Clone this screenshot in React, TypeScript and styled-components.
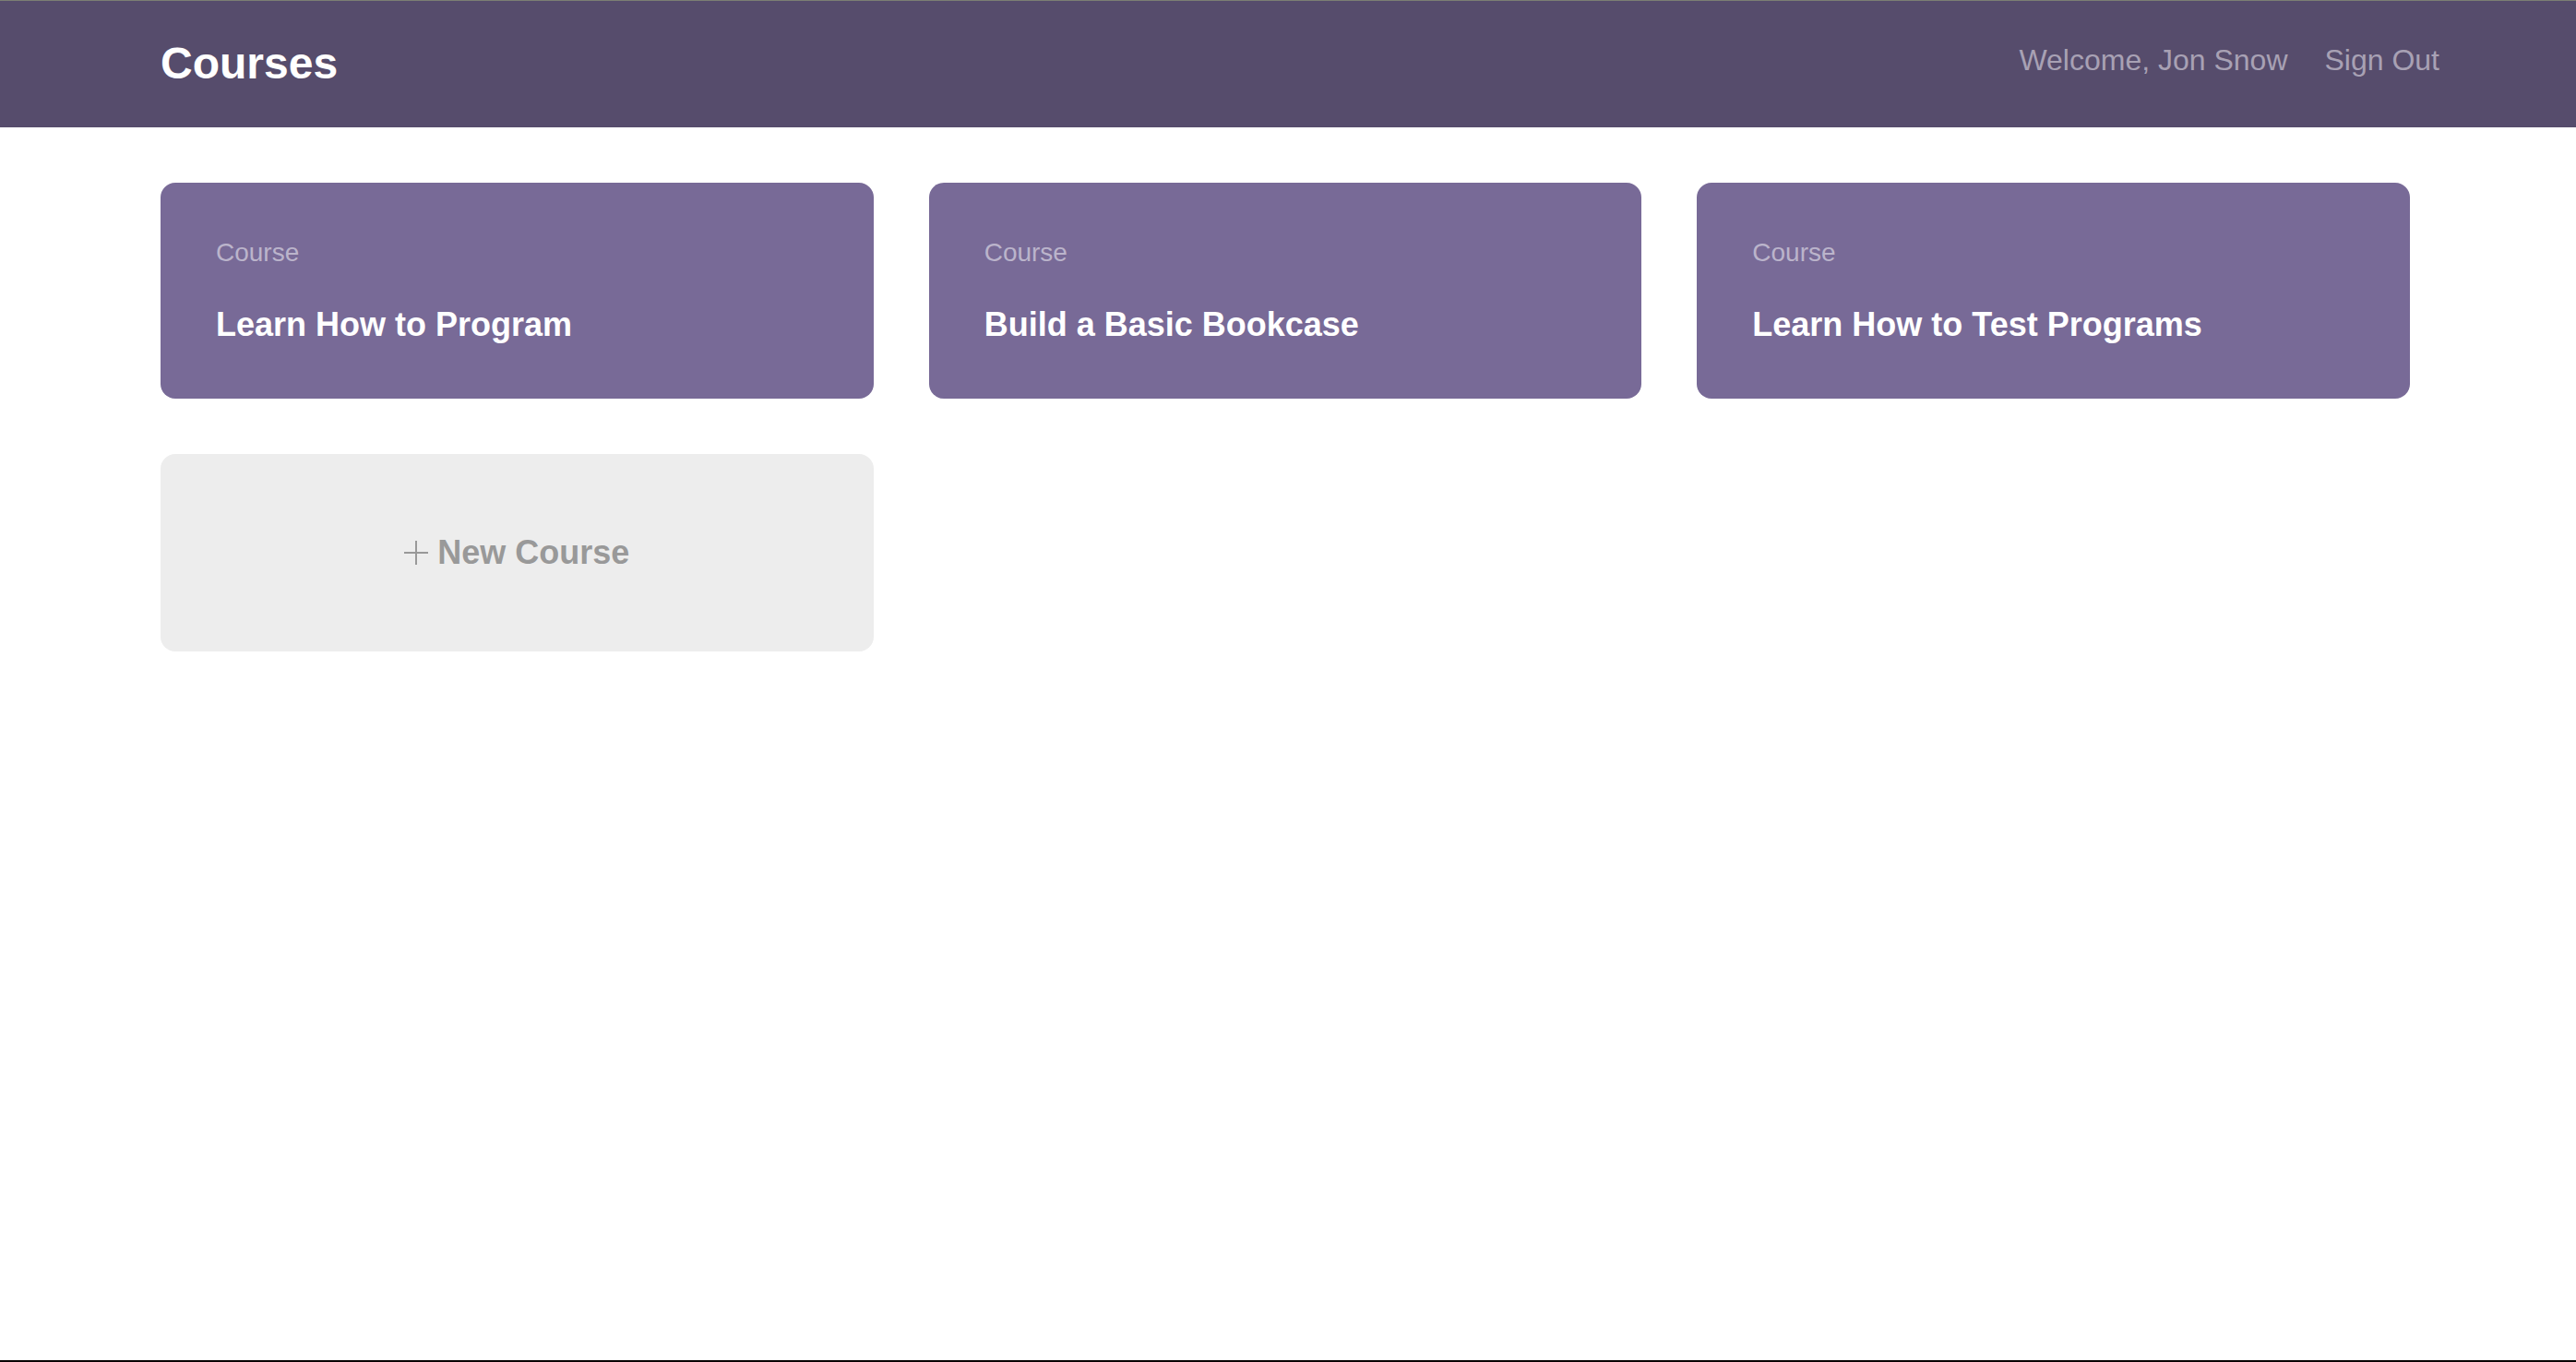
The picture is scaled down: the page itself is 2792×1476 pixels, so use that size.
import React from "react";
import styled, { createGlobalStyle } from "styled-components";

const GlobalStyle = createGlobalStyle`
  *, *::before, *::after {
    box-sizing: border-box;
  }
  body {
    margin: 0;
    background: #fff;
    font-family: "Liberation Sans", Helvetica, Arial, sans-serif;
  }
  a {
    color: inherit;
    text-decoration: none;
  }
`;

const Page = styled.div`
  min-height: 100vh;
  border-bottom: 2px solid #080404;
`;

const Header = styled.header`
  display: flex;
  align-items: flex-start;
  justify-content: space-between;
  padding: 40px 148px 41px 174px;
  border-top: 1px solid #7b7e74;
  background: #564c6c;
`;

const Logo = styled.h1`
  margin: 0;
  color: #fff;
  font-size: 48px;
  line-height: 56px;
`;

const Nav = styled.nav`
  display: flex;
  gap: 40px;
  padding-top: 6px;
  color: #a8a1b4;
  font-size: 32px;
  line-height: 36px;
`;

const CourseGrid = styled.main`
  display: grid;
  grid-template-columns: repeat(3, minmax(0, 1fr));
  align-items: start;
  gap: 60px;
  padding: 60px 180px 60px 174px;
`;

const Card = styled.a`
  display: flex;
  flex-direction: column;
  gap: 42px;
  padding: 60px;
  border-radius: 16px;
  background: #786a97;
`;

const CardLabel = styled.span`
  color: #bbb4cb;
  font-size: 28px;
  line-height: 32px;
`;

const CardTitle = styled.h2`
  margin: 0;
  color: #fff;
  font-size: 36px;
  line-height: 40px;
`;

const NewCard = styled.a`
  display: flex;
  align-items: center;
  justify-content: center;
  gap: 10px;
  padding: 87px 60px;
  border-radius: 16px;
  background: #ededed;
  color: #999;
  font-size: 36px;
  font-weight: 700;
  line-height: 40px;
`;

const PlusIcon = () => (
  <svg width="26" height="26" viewBox="0 0 26 26" aria-hidden="true">
    <path d="M12 0h2v12h12v2H14v12h-2V14H0v-2h12z" fill="currentColor" />
  </svg>
);

const courses = [
  { id: 1, title: "Learn How to Program" },
  { id: 2, title: "Build a Basic Bookcase" },
  { id: 3, title: "Learn How to Test Programs" },
];

export default function App() {
  return (
    <Page>
      <GlobalStyle />
      <Header>
        <Logo>
          <a href="#courses">Courses</a>
        </Logo>
        <Nav>
          <span>Welcome, Jon Snow</span>
          <a href="#signout">Sign Out</a>
        </Nav>
      </Header>
      <CourseGrid>
        {courses.map((course) => (
          <Card key={course.id} href={`#courses/${course.id}`}>
            <CardLabel>Course</CardLabel>
            <CardTitle>{course.title}</CardTitle>
          </Card>
        ))}
        <NewCard href="#courses/create">
          <PlusIcon />
          <span>New Course</span>
        </NewCard>
      </CourseGrid>
    </Page>
  );
}
